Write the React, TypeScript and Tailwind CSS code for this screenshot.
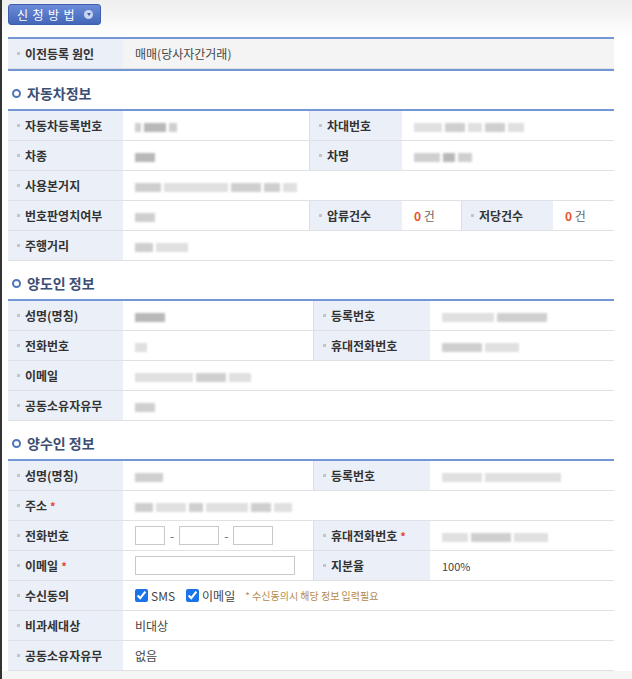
import React from "react";

const FONT = { fontFamily: '"Noto Sans CJK KR", "Noto Sans", sans-serif' };

function Blur({ parts }: { parts: [number, string][] }) {
  return (
    <span className="inline-flex items-center gap-[3px] align-middle">
      {parts.map(([w, c], i) => (
        <span key={i} className={`inline-block h-[9px] blur-[1.3px] ${c}`} style={{ width: w }} />
      ))}
    </span>
  );
}

function Label({ children, req, left }: { children: React.ReactNode; req?: boolean; left?: boolean }) {
  return (
    <th
      className={`h-[30px] border-b border-[#dfe1e4] bg-[#ebf0f8] pl-[9px] text-left align-middle text-[12px] font-bold text-[#333] ${
        left ? "border-l border-l-[#dcdfe4]" : ""
      }`}
    >
      <span className="flex items-center gap-[5px] whitespace-nowrap">
        <span className="size-[3px] bg-[#c4c4c4]" />
        <span>
          {children}
          {req && <span className="ml-[3px] text-[11px] text-[#e5412d]">*</span>}
        </span>
      </span>
    </th>
  );
}

function Value({ children, span, gray }: { children?: React.ReactNode; span?: number; gray?: boolean }) {
  return (
    <td
      colSpan={span}
      className={`h-[30px] border-b border-[#dfe1e4] px-[12px] align-middle text-[12px] text-[#444] ${
        gray ? "bg-[#f4f4f4]" : "bg-white"
      }`}
    >
      {children}
    </td>
  );
}

function Heading({ children }: { children: React.ReactNode }) {
  return (
    <div className="mb-[6px] mt-[12px] flex h-[20px] items-center gap-[6px] pl-[4px]">
      <span className="size-[9px] rounded-full border-[2.5px] border-[#4f76bd]" />
      <span className="text-[14px] font-bold text-[#3b4e74]">{children}</span>
    </div>
  );
}

function Count() {
  return (
    <span>
      <span className="font-bold text-[#e8542a]">0</span> <span className="text-[#666]">건</span>
    </span>
  );
}

const d = "bg-[#b8b8b8]";
const m = "bg-[#cfcfcf]";
const l = "bg-[#e0e0e0]";

export default function App() {
  return (
    <div style={FONT} className="min-h-[679px] w-[632px] border-l-2 border-[#333] bg-white">
      <div className="bg-linear-to-b from-[#eeeeee] to-white pb-[12px] pl-[6px] pt-[4px]">
        <button className="flex h-[21px] w-[93px] items-center gap-[5px] rounded-[3px] border border-[#3d5fae] bg-linear-to-b from-[#6a8cd8] to-[#4466b8] pl-[8px] text-[12px] tracking-[4.5px] text-white">
          신청방법
          <span className="flex size-[9px] items-center justify-center rounded-full bg-[#c9d5f0]">
            <span className="h-0 w-0 border-x-[2.5px] border-t-[3px] border-x-transparent border-t-[#3d5fae]" />
          </span>
        </button>
      </div>

      <div className="ml-[6px] w-[606px]">
        <table className="w-full table-fixed border-separate border-spacing-0 border-y-2 border-[#7396d4]">
          <colgroup>
            <col className="w-[115px]" />
            <col />
          </colgroup>
          <tbody>
            <tr>
              <Label>이전등록 원인</Label>
              <Value gray>매매(당사자간거래)</Value>
            </tr>
          </tbody>
        </table>

        <Heading>자동차정보</Heading>
        <table className="w-full table-fixed border-separate border-spacing-0 border-t-2 border-[#7396d4]">
          <colgroup>
            <col className="w-[115px]" />
            <col className="w-[186px]" />
            <col className="w-[93px]" />
            <col className="w-[59px]" />
            <col className="w-[92px]" />
            <col />
          </colgroup>
          <tbody>
            <tr>
              <Label>자동차등록번호</Label>
              <Value><Blur parts={[[6, m], [22, d], [8, m]]} /></Value>
              <Label left>차대번호</Label>
              <Value span={3}><Blur parts={[[28, l], [20, m], [14, l], [20, m], [16, l]]} /></Value>
            </tr>
            <tr>
              <Label>차종</Label>
              <Value><Blur parts={[[20, d]]} /></Value>
              <Label left>차명</Label>
              <Value span={3}><Blur parts={[[26, m], [12, d], [14, m]]} /></Value>
            </tr>
            <tr>
              <Label>사용본거지</Label>
              <Value span={5}><Blur parts={[[26, m], [64, l], [30, m], [16, m], [14, l]]} /></Value>
            </tr>
            <tr>
              <Label>번호판영치여부</Label>
              <Value><Blur parts={[[20, m]]} /></Value>
              <Label left>압류건수</Label>
              <Value><Count /></Value>
              <Label left>저당건수</Label>
              <Value><Count /></Value>
            </tr>
            <tr>
              <Label>주행거리</Label>
              <Value span={5}><Blur parts={[[18, m], [32, l]]} /></Value>
            </tr>
          </tbody>
        </table>

        <Heading>양도인 정보</Heading>
        <table className="w-full table-fixed border-separate border-spacing-0 border-t-2 border-[#7396d4]">
          <colgroup>
            <col className="w-[115px]" />
            <col className="w-[190px]" />
            <col className="w-[117px]" />
            <col />
          </colgroup>
          <tbody>
            <tr>
              <Label>성명(명칭)</Label>
              <Value><Blur parts={[[30, d]]} /></Value>
              <Label left>등록번호</Label>
              <Value><Blur parts={[[52, l], [50, m]]} /></Value>
            </tr>
            <tr>
              <Label>전화번호</Label>
              <Value><Blur parts={[[12, l]]} /></Value>
              <Label left>휴대전화번호</Label>
              <Value><Blur parts={[[40, m], [34, l]]} /></Value>
            </tr>
            <tr>
              <Label>이메일</Label>
              <Value span={3}><Blur parts={[[58, l], [30, m], [22, l]]} /></Value>
            </tr>
            <tr>
              <Label>공동소유자유무</Label>
              <Value span={3}><Blur parts={[[20, m]]} /></Value>
            </tr>
          </tbody>
        </table>

        <Heading>양수인 정보</Heading>
        <table className="w-full table-fixed border-separate border-spacing-0 border-t-2 border-[#7396d4]">
          <colgroup>
            <col className="w-[115px]" />
            <col className="w-[190px]" />
            <col className="w-[117px]" />
            <col />
          </colgroup>
          <tbody>
            <tr>
              <Label>성명(명칭)</Label>
              <Value><Blur parts={[[28, m]]} /></Value>
              <Label left>등록번호</Label>
              <Value><Blur parts={[[40, l], [76, l]]} /></Value>
            </tr>
            <tr>
              <Label req>주소</Label>
              <Value span={3}><Blur parts={[[18, m], [30, l], [14, m], [42, l], [20, m], [18, l]]} /></Value>
            </tr>
            <tr>
              <Label>전화번호</Label>
              <Value>
                <span className="flex items-center gap-[5px]">
                  <input className="h-[19px] w-[30px] border border-[#c9c9c9] bg-white" />
                  <span className="text-[#666]">-</span>
                  <input className="h-[19px] w-[40px] border border-[#c9c9c9] bg-white" />
                  <span className="text-[#666]">-</span>
                  <input className="h-[19px] w-[40px] border border-[#c9c9c9] bg-white" />
                </span>
              </Value>
              <Label left req>휴대전화번호</Label>
              <Value><Blur parts={[[26, l], [40, m], [34, l]]} /></Value>
            </tr>
            <tr>
              <Label req>이메일</Label>
              <Value>
                <input className="h-[19px] w-[160px] border border-[#c9c9c9] bg-white" />
              </Value>
              <Label left>지분율</Label>
              <Value><span className="text-[11px]">100%</span></Value>
            </tr>
            <tr>
              <Label>수신동의</Label>
              <Value span={3}>
                <span className="flex items-center whitespace-nowrap">
                  <label className="flex items-center gap-[3px]">
                    <input type="checkbox" defaultChecked className="m-0 size-[13px] accent-[#1a73e8]" />
                    <span>SMS</span>
                  </label>
                  <label className="ml-[11px] flex items-center gap-[3px]">
                    <input type="checkbox" defaultChecked className="m-0 size-[13px] accent-[#1a73e8]" />
                    <span>이메일</span>
                  </label>
                  <span className="ml-[10px] text-[10px] text-[#b48a4e]">* 수신동의시 해당 정보 입력필요</span>
                </span>
              </Value>
            </tr>
            <tr>
              <Label>비과세대상</Label>
              <Value span={3}>비대상</Value>
            </tr>
            <tr>
              <Label>공동소유자유무</Label>
              <Value span={3}>없음</Value>
            </tr>
          </tbody>
        </table>
      </div>
      <div className="h-[10px] bg-[#f5f5f5]" />
    </div>
  );
}
